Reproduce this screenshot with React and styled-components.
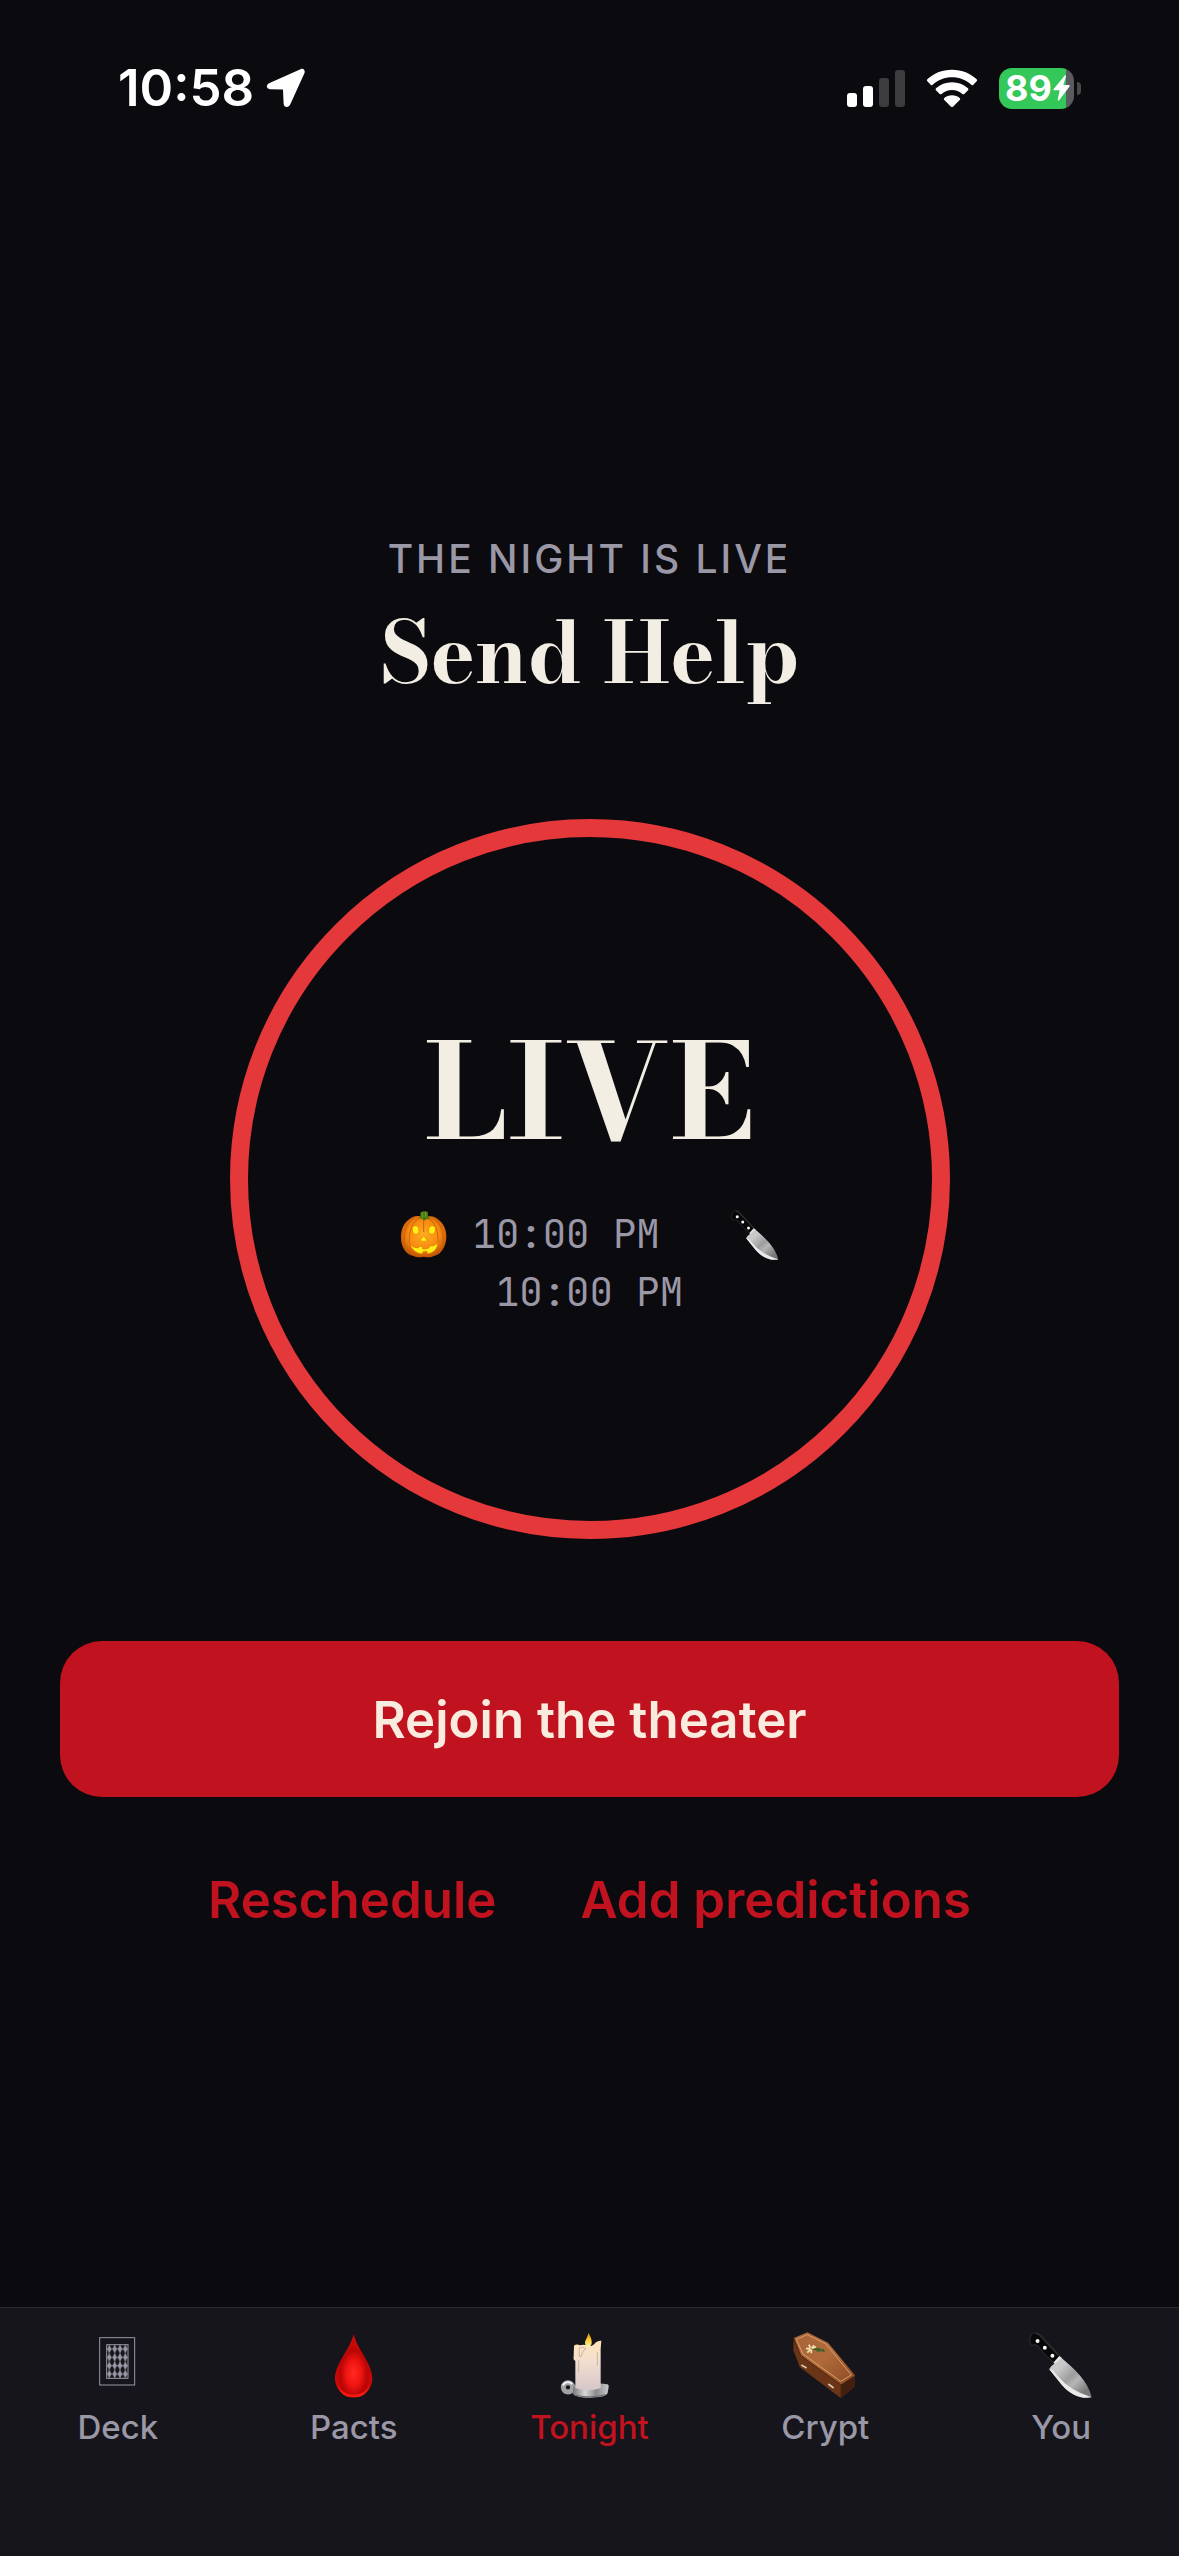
import React from 'react'
import styled, { createGlobalStyle } from 'styled-components'

const GlobalStyle = createGlobalStyle`
    * {
        box-sizing: border-box;
    }
    body {
        margin: 0;
        background: #0b0a0f;
        font-family: Inter, 'Liberation Sans', sans-serif;
    }
`

const Screen = styled.div`
    min-height: 100vh;
    display: flex;
    flex-direction: column;
    background: #0b0a0f;
    color: #f2eee3;
`

const StatusBar = styled.header`
    height: 176px;
    padding: 0 98px 0 118px;
    display: flex;
    align-items: center;
    justify-content: space-between;
    color: #fff;
`

const StatusGroup = styled.div`
    display: flex;
    align-items: center;
    gap: ${(props) => props.$gap}px;
`

const Clock = styled.time`
    font-size: 51px;
    line-height: 60px;
    font-weight: 600;
`

const Battery = styled.div`
    display: flex;
    align-items: center;
    gap: 3px;
`

const BatteryBody = styled.div`
    width: 75px;
    height: 41px;
    padding-left: 6px;
    display: flex;
    align-items: center;
    gap: 1px;
    border-radius: 13px;
    background: linear-gradient(to right, #34c759 89%, #5b5b5f 89%);
    font-size: 36px;
    line-height: 40px;
    font-weight: 700;
`

const BatteryCap = styled.span`
    width: 4px;
    height: 13px;
    border-radius: 0 6px 6px 0;
    background: #48484b;
`

const Main = styled.main`
    flex: 1;
    padding: 29px 60px 0;
    display: flex;
    flex-direction: column;
    align-items: center;
    justify-content: center;
`

const Eyebrow = styled.p`
    margin: 0 0 14px;
    font-size: 39px;
    line-height: 48px;
    font-weight: 500;
    letter-spacing: 3px;
    text-transform: uppercase;
    color: #9a97a6;
`

const Title = styled.h1`
    margin: 0 0 110px;
    font-family: 'Bodoni Moda', 'Libre Bodoni', 'Liberation Serif', serif;
    font-size: 84px;
    line-height: 112px;
    font-weight: 700;
`

const Ring = styled.section`
    width: 720px;
    max-width: 100%;
    aspect-ratio: 1;
    margin-bottom: 102px;
    padding-bottom: 36px;
    display: flex;
    flex-direction: column;
    align-items: center;
    justify-content: center;
    gap: 24px;
    border: 18px solid #e5383b;
    border-radius: 50%;
`

const RingState = styled.strong`
    font-family: 'Bodoni Moda', 'Libre Bodoni', 'Liberation Serif', serif;
    font-size: 132px;
    line-height: 180px;
    font-weight: 700;
`

const Times = styled.p`
    margin: 0;
    max-width: 480px;
    font-family: 'JetBrains Mono', 'DejaVu Sans Mono', monospace;
    font-size: 39px;
    line-height: 58px;
    text-align: center;
    color: #9a97a6;

    svg {
        width: 50px;
        height: 50px;
        vertical-align: -8px;
        margin: -4px 0;
    }
`

const PrimaryButton = styled.button`
    width: 100%;
    height: 156px;
    margin-bottom: 24px;
    border: 0;
    border-radius: 42px;
    background: #c1121f;
    color: #faebdf;
    font-family: inherit;
    font-size: 51px;
    font-weight: 600;
`

const Actions = styled.div`
    display: flex;
    flex-wrap: wrap;
    justify-content: center;
    gap: 36px;
`

const TextButton = styled.button`
    height: 156px;
    padding: 0 24px;
    border: 0;
    background: none;
    color: #c1121f;
    font-family: inherit;
    font-size: 51px;
    font-weight: 600;
`

const TabBar = styled.nav`
    padding: 24px 0 109px;
    display: grid;
    grid-template-columns: repeat(5, 1fr);
    border-top: 1px solid #2a2930;
    background: #16151b;
`

const Tab = styled.a`
    display: flex;
    flex-direction: column;
    align-items: center;
    gap: 9px;
    font-size: 33px;
    line-height: 40px;
    font-weight: 500;
    text-decoration: none;
    color: ${(props) => (props.$active ? '#c1121f' : '#9a97a6')};

    svg {
        width: 66px;
        height: 66px;
    }
`

const LocationIcon = () => (
    <svg width="40" height="40" viewBox="0 0 40 40" aria-hidden="true">
        <path
            d="M34.5 1.2 3 15.2C-0.2 16.8 0.2 21 4 21.3L17 21.6 17.6 35.5C17.8 39.8 22.6 40.3 24.2 36.6L38.4 5.2C39.6 2.2 37.2 0 34.5 1.2Z"
            fill="#fff"
        />
    </svg>
)

const SignalIcon = () => (
    <svg width="58" height="38" viewBox="0 0 58 38" aria-hidden="true">
        <rect x="0" y="24" width="10" height="14" rx="3" fill="#fff" />
        <rect x="16" y="17" width="10" height="21" rx="3" fill="#fff" />
        <rect x="32" y="9" width="10" height="29" rx="3" fill="#3c3c3f" />
        <rect x="48" y="1" width="10" height="37" rx="3" fill="#3c3c3f" />
    </svg>
)

const WifiIcon = () => (
    <svg width="52" height="38" viewBox="0 0 156 114" aria-hidden="true">
        <g fill="#fff">
            <path d="M78 2C48 2 22 13 4 31Q1 34 4 37L14 47Q17 50 20 47C36 33 56 25 78 25S120 33 136 47Q139 50 142 47L152 37Q155 34 152 31C134 13 108 2 78 2Z" />
            <path d="M78 40C59 40 43 47 30 58Q27 61 30 64L41 75Q44 77 47 75C56 67 66 63 78 63S100 67 109 75Q112 77 115 75L126 64Q129 61 126 58C113 47 97 40 78 40Z" />
            <path d="M78 79C69 79 61 82 55 87Q52 90 55 93L75 113Q78 115 81 113L101 93Q104 90 101 87C95 82 87 79 78 79Z" />
        </g>
    </svg>
)

const BoltIcon = () => (
    <svg width="17" height="26" viewBox="0 0 51 78" aria-hidden="true">
        <path d="M36 1 2 42Q0 46 5 46H20L14 74Q15 79 19 75L50 34Q51 30 47 30H31L39 4Q39 0 36 1Z" fill="#fff" />
    </svg>
)

const KnifeIcon = () => (
    <svg viewBox="0 0 192 200" aria-hidden="true">
        <defs>
            <linearGradient id="knife-blade" x1="0.2" y1="0.3" x2="0.8" y2="0.9">
                <stop offset="0" stopColor="#c9c9c9" />
                <stop offset="0.4" stopColor="#9c9d9c" />
                <stop offset="0.6" stopColor="#b5b6b5" />
                <stop offset="1" stopColor="#777" />
            </linearGradient>
        </defs>
        <path
            d="M2 24Q3 6 14 3Q26 0 34 9L92 72L74 92Q50 74 34 52Q26 39 19 39L6 40Q1 36 2 24Z"
            fill="#070708"
            stroke="#424246"
            strokeWidth="2"
        />
        <path d="M20 6Q28 4 36 14L88 70" fill="none" stroke="#2b2b2e" strokeWidth="5" />
        <circle cx="25" cy="27" r="6" fill="#f5f5f5" />
        <circle cx="47" cy="48" r="6" fill="#f5f5f5" />
        <circle cx="70" cy="72" r="6" fill="#f5f5f5" />
        <path d="M91 73 73 93 79 97 98 78Z" fill="#e8e8e8" />
        <path d="M97 78C136 112 178 148 189 198C157 204 124 190 97 158L60 112Z" fill="url(#knife-blade)" />
        <path d="M60 112 72 116C110 166 140 180 189 198C157 204 124 190 97 158Z" fill="#e9eae9" />
        <path d="M97 79 64 108" stroke="#ddd" strokeWidth="3" />
    </svg>
)

const PumpkinIcon = () => (
    <svg viewBox="0 0 150 150" aria-hidden="true">
        <defs>
            <radialGradient id="pumpkin-skin" cx="0.5" cy="0.45" r="0.58">
                <stop offset="0" stopColor="#ffad20" />
                <stop offset="0.6" stopColor="#f78a12" />
                <stop offset="1" stopColor="#b94a05" />
            </radialGradient>
        </defs>
        <path
            d="M74 24C92 13 112 20 122 32C137 44 143 64 142 84C140 112 125 134 105 138C96 143 84 142 74 140C64 142 52 143 43 138C20 134 7 110 6 86C5 62 12 42 28 30C42 17 58 14 74 24Z"
            fill="url(#pumpkin-skin)"
        />
        <g fill="none" stroke="#cf6207" strokeWidth="3">
            <path d="M62 24C34 36 18 96 44 136" />
            <path d="M86 24C114 36 130 96 104 136" />
            <path d="M44 24C12 46 8 104 28 130" />
            <path d="M104 24C136 46 140 104 120 130" />
            <path d="M74 26V66" />
        </g>
        <path d="M58 25Q66 22 64 8Q73 1 86 5L88 20Q90 25 96 27Q82 25 75 32Q70 24 58 25Z" fill="#477912" />
        <path d="M69 7Q73 16 70 23M80 6V22" fill="none" stroke="#76a52a" strokeWidth="3" />
        <g fill="#ffef18" stroke="#e77a00" strokeWidth="2">
            <ellipse cx="50" cy="60" rx="10" ry="13" transform="rotate(-12 50 60)" />
            <ellipse cx="99" cy="60" rx="10" ry="13" transform="rotate(12 99 60)" />
            <path d="M74 77 62 92Q74 97 86 92Z" />
            <path d="M31 101Q44 115 58 114L60 108L70 110L71 117Q82 118 91 113L91 107L101 108Q111 105 117 98Q115 120 96 129L85 131L84 124L72 125L70 132Q44 130 31 101Z" />
        </g>
    </svg>
)

const DeckIcon = () => (
    <svg viewBox="0 0 198 198" aria-hidden="true">
        <defs>
            <pattern id="card-back" x="65" y="38" width="16" height="25" patternUnits="userSpaceOnUse">
                <path d="M8 1 15 13 8 25 1 13Z" fill="currentColor" />
                <path d="M0 13H16M8 0V25" stroke="currentColor" strokeWidth="2" />
            </pattern>
        </defs>
        <rect x="44" y="17" width="105" height="142" fill="none" stroke="currentColor" strokeWidth="3" />
        <rect x="65" y="38" width="64" height="101" fill="url(#card-back)" stroke="currentColor" strokeWidth="3" />
    </svg>
)

const DropIcon = () => (
    <svg viewBox="0 0 198 198" aria-hidden="true">
        <defs>
            <radialGradient id="blood" cx="0.5" cy="0.62" r="0.55">
                <stop offset="0" stopColor="#ff2a20" />
                <stop offset="0.35" stopColor="#f21512" />
                <stop offset="0.65" stopColor="#b90605" />
                <stop offset="1" stopColor="#d40a08" />
            </radialGradient>
        </defs>
        <path d="M98 6C105 46 154 94 154 140A56 56 0 0 1 42 140C42 94 91 46 98 6Z" fill="url(#blood)" />
        <path d="M49 158Q62 187 98 188Q134 187 147 158Q138 196 98 196Q58 196 49 158Z" fill="#fb1712" />
    </svg>
)

const CandleIcon = () => (
    <svg viewBox="0 0 198 198" aria-hidden="true">
        <defs>
            <linearGradient id="wax" x1="0" y1="0" x2="0" y2="1">
                <stop offset="0" stopColor="#ffe4b8" />
                <stop offset="0.4" stopColor="#f3dfd0" />
                <stop offset="1" stopColor="#d5c7c9" />
            </linearGradient>
            <linearGradient id="dish" x1="0" y1="0" x2="1" y2="0">
                <stop offset="0" stopColor="#77777a" />
                <stop offset="0.35" stopColor="#d8d8da" />
                <stop offset="0.65" stopColor="#8a8a8d" />
                <stop offset="1" stopColor="#c9c9cc" />
            </linearGradient>
            <linearGradient id="flame" x1="0" y1="0" x2="0" y2="1">
                <stop offset="0" stopColor="#e88a00" />
                <stop offset="0.5" stopColor="#ffc928" />
                <stop offset="1" stopColor="#fff6b0" />
            </linearGradient>
        </defs>
        <circle cx="36" cy="166" r="14" fill="none" stroke="#a2a2a5" strokeWidth="15" />
        <path d="M20 160Q32 143 49 156" fill="none" stroke="#f0f0f1" strokeWidth="6" />
        <path d="M52 162Q100 150 150 156Q159 156 158 164L155 183Q150 197 102 197Q58 197 50 185Z" fill="url(#dish)" />
        <path d="M60 190Q102 200 148 188" fill="none" stroke="#6a6a6e" strokeWidth="3" />
        <path
            d="M54 41Q62 34 72 40Q84 35 96 42Q110 44 118 32Q127 25 136 26L134 50V168Q97 182 58 168V86Q51 86 53 72Z"
            fill="url(#wax)"
        />
        <path d="M70 48Q79 42 90 50Q80 54 78 66Q76 78 70 74ZM124 60V100M68 84V122" fill="none" stroke="#c9b3a2" strokeWidth="3" />
        <path d="M97 2C105 16 108 24 107 34Q105 44 97 44Q88 43 87 33C87 23 96 16 97 2Z" fill="url(#flame)" />
    </svg>
)

const CoffinIcon = () => (
    <svg viewBox="0 0 198 198" aria-hidden="true">
        <defs>
            <linearGradient id="coffin-lid" x1="0" y1="0" x2="1" y2="1">
                <stop offset="0" stopColor="#a86438" />
                <stop offset="0.5" stopColor="#b06a3b" />
                <stop offset="1" stopColor="#8a4a22" />
            </linearGradient>
        </defs>
        <path d="M5 18 4 54 23 105 146 198 187 165 189 130Z" fill="#6a3517" />
        <path d="M146 158V198L187 165 189 131Z" fill="#43200d" />
        <path d="M5 18 46 1 108 32 189 130 146 158 26 70Z" fill="url(#coffin-lid)" />
        <path d="M13 22 46 8 102 36 178 129 146 148 33 66Z" fill="none" stroke="#dc9d68" strokeWidth="3" />
        <path d="M5 18 26 70 146 158" fill="none" stroke="#4b2410" strokeWidth="3" />
        <path d="M28 99 44 108M109 156 125 168" stroke="#d9c4ac" strokeWidth="5" />
        <path d="M58 52 78 50 98 58M66 48 80 57M74 56 96 54" fill="none" stroke="#3f6127" strokeWidth="6" />
        <path d="M50 38 58 50 66 40M42 50 58 50 46 62M58 50 58 64M58 50 72 44" fill="none" stroke="#f1e4bf" strokeWidth="5" />
        <circle cx="58" cy="50" r="4" fill="#d2a93c" />
    </svg>
)

const tabs = [
    { name: 'Deck', Icon: DeckIcon },
    { name: 'Pacts', Icon: DropIcon },
    { name: 'Tonight', Icon: CandleIcon, active: true },
    { name: 'Crypt', Icon: CoffinIcon },
    { name: 'You', Icon: KnifeIcon },
]

const App = () => {
    return (
        <Screen>
            <GlobalStyle />
            <StatusBar>
                <StatusGroup $gap={12}>
                    <Clock>10:58</Clock>
                    <LocationIcon />
                </StatusGroup>
                <StatusGroup $gap={21}>
                    <SignalIcon />
                    <WifiIcon />
                    <Battery>
                        <BatteryBody>
                            89
                            <BoltIcon />
                        </BatteryBody>
                        <BatteryCap />
                    </Battery>
                </StatusGroup>
            </StatusBar>

            <Main>
                <Eyebrow>The night is live</Eyebrow>
                <Title>Send Help</Title>
                <Ring>
                    <RingState>LIVE</RingState>
                    <Times>
                        <PumpkinIcon />
                        {'\u00a010:00\u00a0PM\u00a0\u00a0\u00a0'}
                        <KnifeIcon />
                        {' 10:00\u00a0PM'}
                    </Times>
                </Ring>
                <PrimaryButton type="button">Rejoin the theater</PrimaryButton>
                <Actions>
                    <TextButton type="button">Reschedule</TextButton>
                    <TextButton type="button">Add predictions</TextButton>
                </Actions>
            </Main>

            <TabBar>
                {tabs.map(({ name, Icon, active }) => (
                    <Tab key={name} href={`#${name.toLowerCase()}`} $active={active}>
                        <Icon />
                        {name}
                    </Tab>
                ))}
            </TabBar>
        </Screen>
    )
}

export default App
